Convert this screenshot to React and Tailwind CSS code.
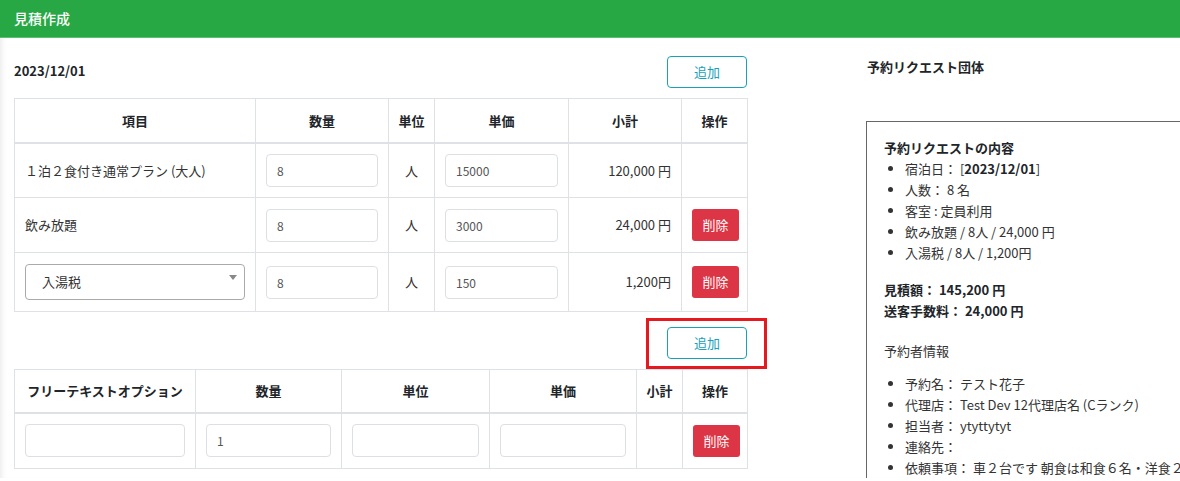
import React from "react";

const inputCls =
  "block h-[33px] w-full rounded-[4px] border border-[#dcdfe4] bg-white px-[10px] text-[12px] text-[#555] outline-none";
const thCls = "border border-[#dee2e6] border-b-2 px-[10px] text-center text-[13px] font-bold text-[#212529]";
const tdCls = "border border-[#dee2e6] px-[10px] text-[13px] text-[#333]";

const AddButton = () => (
  <button className="h-[32px] w-[80px] rounded-[4px] border border-[#17a2b8] bg-white text-[13px] text-[#17a2b8]">
    追加
  </button>
);

const DeleteButton = () => (
  <button className="h-[32px] w-[47px] rounded-[3px] bg-[#dc3545] text-[13px] text-white">削除</button>
);

const items = [
  { name: "１泊２食付き通常プラン (大人)", qty: "8", price: "15000", sub: "120,000 円", del: false },
  { name: "飲み放題", qty: "8", price: "3000", sub: "24,000 円", del: true },
  { name: "入湯税", qty: "8", price: "150", sub: "1,200円", del: true, select: true },
];

const App = () => {
  return (
    <div className="h-[481px] w-[1180px] overflow-hidden bg-white font-['Noto_Sans_CJK_JP',sans-serif] text-[#212529]">
      {/* ---------- header ---------- */}
      <div className="flex h-[38px] items-center border-b border-[#5cbf72] bg-[#28a745] px-[14px] text-[14px] font-medium text-white">
        見積作成
      </div>

      <div className="flex shadow-[inset_6px_0_6px_-5px_rgba(0,0,0,0.10)]">
        {/* ---------- left column ---------- */}
        <div className="w-[747px] shrink-0 pl-[14px]">
          <div className="flex items-center justify-between pt-[18px]">
            <span className="-mt-[2px] text-[13px] font-bold">2023/12/01</span>
            <AddButton />
          </div>

          <table className="mt-[10px] w-[733px] table-fixed border-collapse">
            <colgroup>
              <col className="w-[241px]" />
              <col className="w-[133px]" />
              <col className="w-[46px]" />
              <col className="w-[134px]" />
              <col className="w-[113px]" />
              <col className="w-[66px]" />
            </colgroup>
            <thead>
              <tr className="h-[44px]">
                <th className={thCls}>項目</th>
                <th className={thCls}>数量</th>
                <th className="border border-b-2 border-[#dee2e6] px-0 text-center text-[13px] font-bold">単位</th>
                <th className={thCls}>単価</th>
                <th className={thCls}>小計</th>
                <th className={thCls}>操作</th>
              </tr>
            </thead>
            <tbody>
              {items.map((it, i) => (
                <tr key={i} className={it.select ? "h-[59px]" : "h-[55px]"}>
                  <td className={tdCls}>
                    {it.select ? (
                      <div className="relative flex h-[36px] items-center rounded-[4px] border border-[#aaa] pl-[16px] text-[13px] text-[#333]">
                        {it.name}
                        <span className="absolute right-[7px] top-[10px] h-0 w-0 border-x-[4px] border-t-[5px] border-x-transparent border-t-[#888]" />
                      </div>
                    ) : (
                      it.name
                    )}
                  </td>
                  <td className={tdCls}>
                    <input className={inputCls} defaultValue={it.qty} />
                  </td>
                  <td className="border border-[#dee2e6] text-center text-[13px] text-[#333]">人</td>
                  <td className={tdCls}>
                    <input className={inputCls} defaultValue={it.price} />
                  </td>
                  <td className={`${tdCls} text-right`}>{it.sub}</td>
                  <td className={tdCls}>{it.del && <DeleteButton />}</td>
                </tr>
              ))}
            </tbody>
          </table>

          <div className="flex justify-end pb-[10px] pt-[15px]">
            <div className="relative">
              <AddButton />
              <div className="absolute -bottom-[10px] -left-[21px] -right-[20px] -top-[9px] border-[3px] border-[#e5191e]" />
            </div>
          </div>

          <table className="w-[733px] table-fixed border-collapse">
            <colgroup>
              <col className="w-[181px]" />
              <col className="w-[146px]" />
              <col className="w-[148px]" />
              <col className="w-[147px]" />
              <col className="w-[46px]" />
              <col className="w-[65px]" />
            </colgroup>
            <thead>
              <tr className="h-[43px]">
                <th className="border border-b-2 border-[#dee2e6] px-0 text-center text-[13px] font-bold">
                  フリーテキストオプション
                </th>
                <th className={thCls}>数量</th>
                <th className={thCls}>単位</th>
                <th className={thCls}>単価</th>
                <th className="border border-b-2 border-[#dee2e6] px-0 text-center text-[13px] font-bold">小計</th>
                <th className={thCls}>操作</th>
              </tr>
            </thead>
            <tbody>
              <tr className="h-[56px]">
                <td className={tdCls}>
                  <input className={inputCls} />
                </td>
                <td className={tdCls}>
                  <input className={inputCls} defaultValue="1" />
                </td>
                <td className={tdCls}>
                  <input className={inputCls} />
                </td>
                <td className={tdCls}>
                  <input className={inputCls} />
                </td>
                <td className={tdCls}></td>
                <td className={tdCls}>
                  <DeleteButton />
                </td>
              </tr>
            </tbody>
          </table>
        </div>

        {/* ---------- right column ---------- */}
        <div className="ml-[119px] w-[420px] shrink-0 text-[13px] text-[#333]">
          <div className="pt-[19px] pl-[1px] font-bold text-[#212529]">予約リクエスト団体</div>
          <div className="mt-[44px] border-l border-t border-[#666] pl-[17px] pt-[15px] leading-[21px]">
            <div className="font-bold text-[#212529]">予約リクエストの内容</div>
            <ul className="list-disc pl-[21px]">
              <li>
                宿泊日： [<b className="text-[#212529]">2023/12/01</b>]
              </li>
              <li>人数： 8 名</li>
              <li>客室 : 定員利用</li>
              <li>飲み放題 / 8人 / 24,000 円</li>
              <li>入湯税 / 8人 / 1,200円</li>
            </ul>
            <div className="mt-[16px] font-bold text-[#212529]">
              <div>見積額： 145,200 円</div>
              <div>送客手数料： 24,000 円</div>
            </div>
            <div className="mt-[19px]">予約者情報</div>
            <ul className="mt-[12px] list-disc whitespace-nowrap pl-[21px]">
              <li>予約名： テスト花子</li>
              <li>代理店： Test Dev 12代理店名 (Cランク)</li>
              <li>担当者： ytyttytyt</li>
              <li>連絡先：</li>
              <li>依頼事項： 車２台です 朝食は和食６名・洋食２名</li>
            </ul>
          </div>
        </div>
      </div>
    </div>
  );
};

export default App;
